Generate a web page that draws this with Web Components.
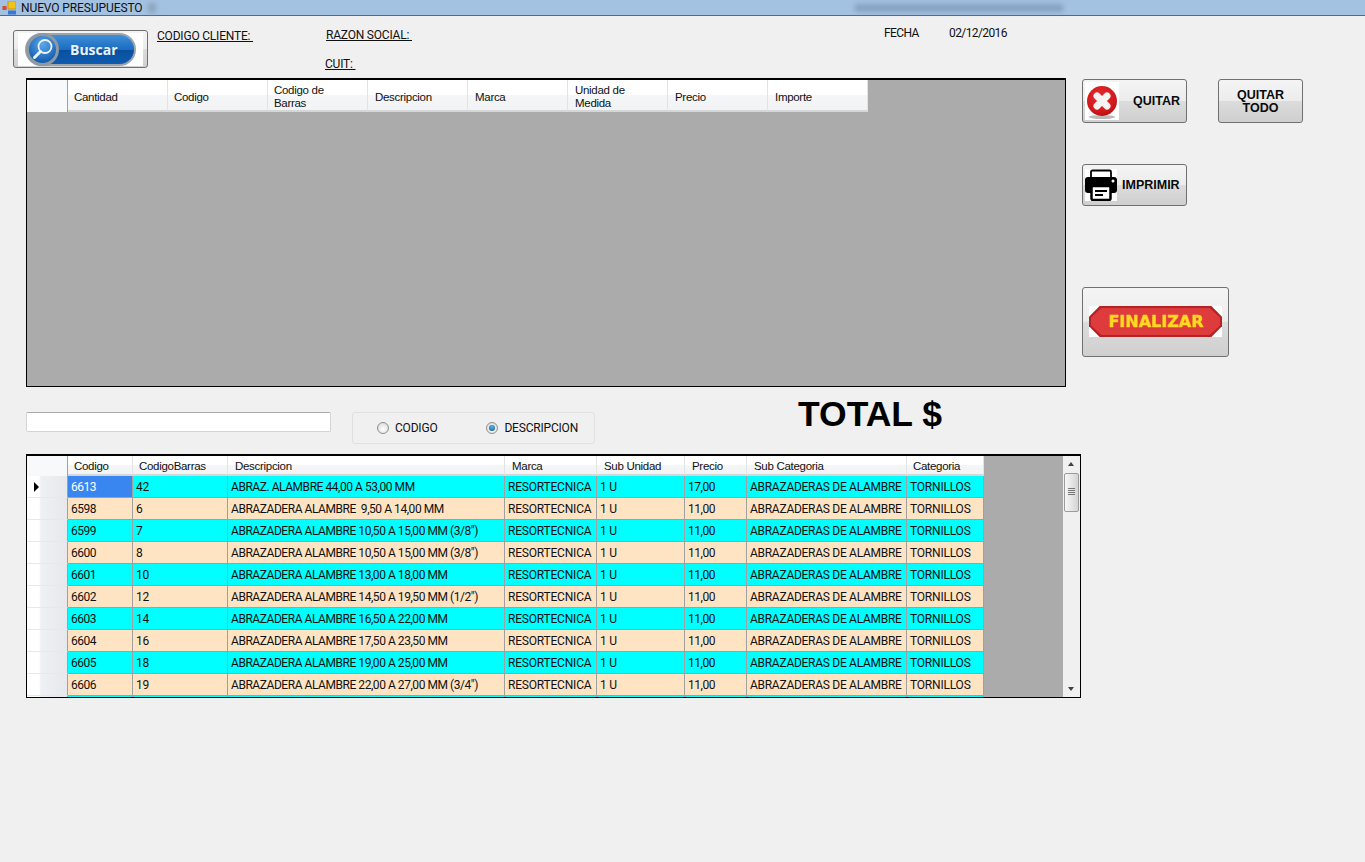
<!DOCTYPE html>
<html lang="es">
<head>
<meta charset="utf-8">
<title>NUEVO PRESUPUESTO</title>
<style>
  html, body { margin: 0; background: #f0f0f0; }
  body { font: 12px Roboto, "Liberation Sans", Arial, sans-serif; color: #111; letter-spacing: -0.2px; }
</style>
</head>
<body>
<presupuesto-app></presupuesto-app>

<script>
const BTN_FACE = "linear-gradient(#f4f4f4, #ececec 49%, #dcdcdc 50%, #cfcfcf)";

const ICONS = {
  quitar: `<svg width="34" height="38" viewBox="0 0 34 38"><defs><radialGradient id="r" cx=".45" cy=".35" r=".75"><stop offset="0" stop-color="#e62c2e"/><stop offset=".7" stop-color="#d0181b"/><stop offset="1" stop-color="#960d10"/></radialGradient></defs><rect width="34" height="38" fill="#fff"/><ellipse cx="17" cy="35" rx="13" ry="2" fill="#bbb"/><circle cx="17" cy="19" r="15" fill="url(#r)"/><path d="M12 14 22 24M22 14 12 24" stroke="#f7f3f3" stroke-width="7" stroke-linecap="round"/></svg>`,
  imprimir: `<svg width="32" height="32" viewBox="0 0 32 32"><rect width="32" height="32" fill="#fff"/><path d="M6 8V3q0-1.500 1.500-1.500h17q1.500 0 1.500 1.500V8" fill="none" stroke="#000" stroke-width="1.800"/><rect y="8" width="32" height="16" rx="3" fill="#000"/><circle cx="28" cy="12" r="1.500" fill="#fff"/><rect x="6.500" y="17" width="19" height="14" rx="1.500" fill="#fff" stroke="#000" stroke-width="2.500"/><path d="M10 22h12M10 26h8" stroke="#000" stroke-width="1.800"/></svg>`,
  lupa: `<svg width="24" height="24" viewBox="0 0 24 24"><circle cx="14" cy="9.500" r="6.500" fill="none" stroke="#e8f2fb" stroke-width="1.800"/><path d="M9.500 14.500 3.500 20.500" stroke="#e8f2fb" stroke-width="3" stroke-linecap="round"/></svg>`,
  app: `<svg width="14" height="14" viewBox="0 0 14 14"><rect x="6" y="0" width="8" height="8" fill="#f2c21a" stroke="#b88a10" stroke-width=".7"/><rect x="0.500" y="5" width="4" height="4" fill="#e0442c"/><rect x="6" y="9.500" width="8" height="4" fill="#3a78d8"/></svg>`
};

class WinTitlebar extends HTMLElement {
  constructor() {
    super();
    this.shadow = this.attachShadow({ mode: "open" });
    this.shadow.innerHTML = `
    <style>
      :host { display: flex; align-items: center; height: 15px; border-bottom: 1px solid #56687c; background: #a3c1e1; padding-left: 2px; color: #101010; }
      .title { margin-left: 5px; font-size: 12px; letter-spacing: -0.1px; white-space: nowrap; line-height: 14px; }
      .smudge { width: 8px; height: 10px; margin-left: 5px; background: #8ea6c0; filter: blur(2px); }
      .ghost { width: 208px; height: 8px; margin-left: 699px; background: #7f9ab8; filter: blur(2.500px); opacity: .8; }
    </style>
    ${ICONS.app}
    <span class="title"><slot></slot></span>
    <span class="smudge"></span>
    <span class="ghost"></span>`;
  }
}
customElements.define("win-titlebar", WinTitlebar);

class FaceButton extends HTMLElement {
  constructor() {
    super();
    this.shadow = this.attachShadow({ mode: "open" });
    this.shadow.innerHTML = `
    <style>
      :host { display: flex; align-items: center; box-sizing: border-box; border: 1px solid #707070; border-radius: 3px; background: ${BTN_FACE}; font: bold 12.500px "Liberation Sans", Arial, sans-serif; letter-spacing: 0; color: #0a0a0a; line-height: 13px; text-align: center; overflow: hidden; }
    </style>
    <slot></slot>`;
  }
}
customElements.define("face-button", FaceButton);

class BuscarPill extends HTMLElement {
  constructor() {
    super();
    this.shadow = this.attachShadow({ mode: "open" });
    this.shadow.innerHTML = `
    <style>
      :host { display: flex; align-items: center; box-sizing: border-box; width: 111px; height: 33px; border-radius: 17px; border: 2px solid #9aa5ad; background: linear-gradient(#3f8fd8, #1c6cc0 50%, #0a4f9e 52%, #0e5cb0); position: relative; }
      .disc { box-sizing: border-box; width: 33px; height: 33px; border-radius: 50%; border: 3px solid #8d9aa4; background: radial-gradient(circle at 50% 30%, #5fa8ea, #1560b4 75%); display: flex; align-items: center; justify-content: center; margin: -2px 0 -2px -1px; }
      .txt { margin-left: 11px; color: #e9f3fb; font: bold 14px "Open Sans", "Liberation Sans", sans-serif; letter-spacing: 0; }
    </style>
    <span class="disc">${ICONS.lupa}</span><span class="txt"><slot></slot></span>`;
  }
}
customElements.define("buscar-pill", BuscarPill);

class RadioOption extends HTMLElement {
  constructor() {
    super();
    this.shadow = this.attachShadow({ mode: "open" });
    const on = this.hasAttribute("checked");
    this.shadow.innerHTML = `
    <style>
      :host { display: inline-flex; align-items: center; gap: 6px; white-space: nowrap; }
      i { box-sizing: border-box; width: 12px; height: 12px; border-radius: 50%; border: 1px solid #8e8f8f; background: radial-gradient(circle at 50% 60%, #fff, #d4d4d4); display: flex; align-items: center; justify-content: center; }
      b { width: 6px; height: 6px; border-radius: 50%; background: radial-gradient(circle at 50% 35%, #5cb6e6, #0b4f86); display: ${on ? "block" : "none"}; }
    </style>
    <i><b></b></i><span><slot></slot></span>`;
  }
}
customElements.define("radio-option", RadioOption);

class GridView extends HTMLElement {
  constructor() {
    super();
    this.shadow = this.attachShadow({ mode: "open" });
  }

  set config(cfg) {
    const tpl = cfg.widths.map((w) => w + "px").join(" ");
    const head = cfg.columns.map((c, i) => `<div class="hc" style="padding-left:${cfg.headPad[i]}px">${c}</div>`).join("");
    const rows = (cfg.rows || []).map((r, n) => `
      <div class="row ${n % 2 ? "b" : "a"}">
        <div class="rh">${n === 0 ? '<span class="arrow"></span>' : ""}</div>
        ${r.map((v, i) => `<div class="c ${n === 0 && i === 0 ? "sel" : ""}" style="letter-spacing:${cfg.cellSpacing[i]}px">${v}</div>`).join("")}
      </div>`).join("");
    const scroll = cfg.scroll ? `
      <div class="scroll">
        <span class="up"></span><span class="thumb"></span><span class="dn"></span>
      </div>` : "";

    this.shadow.innerHTML = `
    <style>
      :host { display: block; box-sizing: border-box; border: 1px solid #000; border-top-width: 2px; background: #ababab; overflow: hidden; position: relative; }
      .wrap { --cols: ${cfg.rhWidth}px ${tpl}; }
      .head, .row { display: grid; grid-template-columns: var(--cols); width: max-content; }
      .head { height: ${cfg.headHeight}px; }
      .corner { background: #f8f9fb; border-right: 1px solid #a0a0a0; }
      .hc { display: flex; align-items: center; box-sizing: border-box; padding-top: ${cfg.headNudge}px; background: linear-gradient(#fff, #fff 50%, #f4f6f8 50%, #f2f3f5); border-right: 1px solid #e3e3e3; border-bottom: 2px solid #d4d6d8; font: 11.500px/13px "Liberation Sans", Arial, sans-serif; letter-spacing: -0.3px; }
      .row { height: 22px; }
      .rh { background: linear-gradient(90deg, #fff 30%, #eef0f4 35%, #e6e8ec); border-right: 1px solid #a0a0a0; border-bottom: 1px solid #e8e8e8; position: relative; }
      .arrow { position: absolute; left: 7px; top: 6px; border-left: 5px solid #000; border-top: 5px solid transparent; border-bottom: 5px solid transparent; }
      .c { box-sizing: border-box; padding-left: 3px; line-height: 23px; white-space: nowrap; overflow: hidden; border-right: 1px solid #a0a0a0; border-bottom: 1px solid #a0a0a0; }
      .a .c { background: #00ffff; }
      .b .c { background: #ffe4c4; }
      .row .c.sel { background: #3a86f0; color: #fff; }
      .scroll { position: absolute; right: 0; top: 0; bottom: 0; width: 17px; background: #f0f0f0; }
      .up, .dn { position: absolute; left: 5px; border-left: 3.500px solid transparent; border-right: 3.500px solid transparent; }
      .up { top: 6px; border-bottom: 4px solid #404040; }
      .dn { bottom: 6px; border-top: 4px solid #404040; }
      .thumb { position: absolute; left: 1px; right: 1px; top: 17px; height: 39px; box-sizing: border-box; border: 1px solid #9b9b9b; border-radius: 2px; background: linear-gradient(90deg, #f6f6f6, #e6e6e6 50%, #d4d4d4); }
      .thumb::after { content: ""; position: absolute; left: 3px; right: 3px; top: 14px; height: 7px; background: repeating-linear-gradient(#777 0 1px, transparent 1px 2px); }
    </style>
    <div class="wrap">
      <div class="head"><div class="corner"></div>${head}</div>
      ${rows}
    </div>
    ${scroll}`;
  }
}
customElements.define("grid-view", GridView);

class PresupuestoApp extends HTMLElement {
  constructor() {
    super();
    this.shadow = this.attachShadow({ mode: "open" });
    this.shadow.innerHTML = `
    <style>
      :host { display: block; width: 1365px; height: 862px; overflow: hidden; }
      u { text-underline-offset: 1px; }

      .top { display: grid; grid-template-columns: 144px 169px 558px 65px 1fr; height: 62px; padding-left: 13px; box-sizing: border-box; white-space: nowrap; }
      .buscar { margin-top: 14px; width: 135px; height: 38px; }
      .buscar-img { width: 125px; height: 33px; margin-left: 4px; background: #fff; display: flex; justify-content: center; }
      .cliente { padding-top: 13px; }
      .razon { display: flex; flex-direction: column; align-items: flex-start; gap: 15px; padding-top: 12px; }
      .razon u:last-child { margin-left: -1px; }
      .fecha { padding-top: 10px; letter-spacing: -0.6px; }

      .mid { display: flex; height: 309px; padding-left: 26px; }
      .mid grid-view { width: 1040px; height: 309px; }
      .actions { margin-left: 16px; display: grid; grid-template-columns: 136px 85px; grid-template-rows: 44px 42px 70px; row-gap: 41px; padding-top: 1px; align-content: start; }
      .actions .quitar { grid-column: 1; width: 105px; padding-left: 2px; }
      .actions .todo { justify-content: center; padding: 2px 0 0 0; }
      .actions .imprimir { grid-column: 1; width: 105px; padding-left: 2px; }
      .actions .finalizar { grid-column: 1 / 3; width: 147px; height: 70px; margin-top: 40px; justify-content: center; padding-bottom: 1px; }
      .quitar span { margin-left: 14px; }
      .imprimir span { margin-left: 5px; }
      .sign { display: flex; align-items: center; justify-content: center; width: 133px; height: 31px; background: #fff; }
      .oct { display: flex; align-items: center; justify-content: center; box-sizing: border-box; width: 133px; height: 31px; padding-left: 1px; background: #b52224; clip-path: polygon(8% 0, 92% 0, 100% 35%, 100% 65%, 92% 100%, 8% 100%, 0 65%, 0 35%); position: relative; color: #ffd91f; font: bold 16px "DejaVu Sans", sans-serif; letter-spacing: 0; -webkit-text-stroke: .4px #ffd91f; }
      .oct::before { content: ""; position: absolute; inset: 2px; background: #de3b3d; clip-path: polygon(8% 0, 92% 0, 100% 35%, 100% 65%, 92% 100%, 8% 100%, 0 65%, 0 35%); }
      .oct span { position: relative; }

      .filter { display: flex; align-items: flex-start; height: 67px; box-sizing: border-box; padding: 25px 0 0 26px; }
      .search { box-sizing: border-box; width: 305px; height: 20px; background: #fff; border: 1px solid #d4d4d4; border-top-color: #ababab; border-radius: 2px; }
      .radios { box-sizing: border-box; display: flex; align-items: center; width: 243px; height: 32px; margin-left: 21px; padding: 0 0 0 24px; border: 1px solid #e0e0e0; border-radius: 3px; gap: 49px; }
      .total { margin: -18px 0 0 203px; font: bold 35.500px/40px "Liberation Sans", Arial, sans-serif; letter-spacing: 0; color: #000; white-space: nowrap; }

      .list { margin-left: 26px; width: 1055px; height: 244px; }
    </style>
    <win-titlebar>NUEVO PRESUPUESTO</win-titlebar>
    <section class="top">
      <face-button class="buscar"><span class="buscar-img"><buscar-pill>Buscar</buscar-pill></span></face-button>
      <div class="cliente"><u>CODIGO CLIENTE:&nbsp;</u></div>
      <div class="razon"><u>RAZON SOCIAL:&nbsp;</u><u>CUIT:&nbsp;</u></div>
      <div class="fecha">FECHA</div>
      <div class="fecha">02/12/2016</div>
    </section>
    <section class="mid">
      <grid-view id="detalle"></grid-view>
      <div class="actions">
        <face-button class="quitar">${ICONS.quitar}<span>QUITAR</span></face-button>
        <face-button class="todo"><span>QUITAR<br>TODO</span></face-button>
        <face-button class="imprimir">${ICONS.imprimir}<span>IMPRIMIR</span></face-button>
        <face-button class="finalizar"><span class="sign"><span class="oct"><span>FINALIZAR</span></span></span></face-button>
      </div>
    </section>
    <section class="filter">
      <div class="search"></div>
      <div class="radios">
        <radio-option>CODIGO</radio-option>
        <radio-option checked>DESCRIPCION</radio-option>
      </div>
      <div class="total">TOTAL $</div>
    </section>
    <grid-view id="productos" class="list"></grid-view>`;
  }

  connectedCallback() {
    this.shadow.querySelector("#detalle").config = {
      rhWidth: 41,
      headHeight: 32,
      headNudge: 4,
      widths: [100, 100, 100, 100, 100, 100, 100, 100],
      headPad: [6, 6, 6, 7, 7, 7, 7, 7],
      columns: ["Cantidad", "Codigo", "Codigo de<br>Barras", "Descripcion", "Marca", "Unidad de<br>Medida", "Precio", "Importe"],
    };

    const sub = ["RESORTECNICA", "1 U"];
    const tail = ["ABRAZADERAS DE ALAMBRE", "TORNILLOS"];
    const fila = (cod, barras, desc, precio = "11,00") => [cod, barras, desc, ...sub, precio, ...tail];
    this.shadow.querySelector("#productos").config = {
      rhWidth: 41,
      headHeight: 20,
      headNudge: 2,
      scroll: true,
      widths: [65, 95, 277, 92, 88, 62, 160, 77],
      headPad: [6, 6, 7, 7, 7, 7, 7, 6],
      cellSpacing: [-0.5, -0.2, -0.45, -0.2, -0.2, -0.45, -0.28, -0.2],
      columns: ["Codigo", "CodigoBarras", "Descripcion", "Marca", "Sub Unidad", "Precio", "Sub Categoria", "Categoria"],
      rows: [
        fila("6613", "42", "ABRAZ. ALAMBRE 44,00 A 53,00 MM", "17,00"),
        fila("6598", "6", "ABRAZADERA ALAMBRE &nbsp;9,50 A 14,00 MM"),
        fila("6599", "7", "ABRAZADERA ALAMBRE 10,50 A 15,00 MM (3/8&quot;)"),
        fila("6600", "8", "ABRAZADERA ALAMBRE 10,50 A 15,00 MM (3/8&quot;)"),
        fila("6601", "10", "ABRAZADERA ALAMBRE 13,00 A 18,00 MM"),
        fila("6602", "12", "ABRAZADERA ALAMBRE 14,50 A 19,50 MM (1/2&quot;)"),
        fila("6603", "14", "ABRAZADERA ALAMBRE 16,50 A 22,00 MM"),
        fila("6604", "16", "ABRAZADERA ALAMBRE 17,50 A 23,50 MM"),
        fila("6605", "18", "ABRAZADERA ALAMBRE 19,00 A 25,00 MM"),
        fila("6606", "19", "ABRAZADERA ALAMBRE 22,00 A 27,00 MM (3/4&quot;)"),
        ["", "", "", "", "", "", "", ""],
      ],
    };
  }
}
customElements.define("presupuesto-app", PresupuestoApp);
</script>
</body>
</html>
